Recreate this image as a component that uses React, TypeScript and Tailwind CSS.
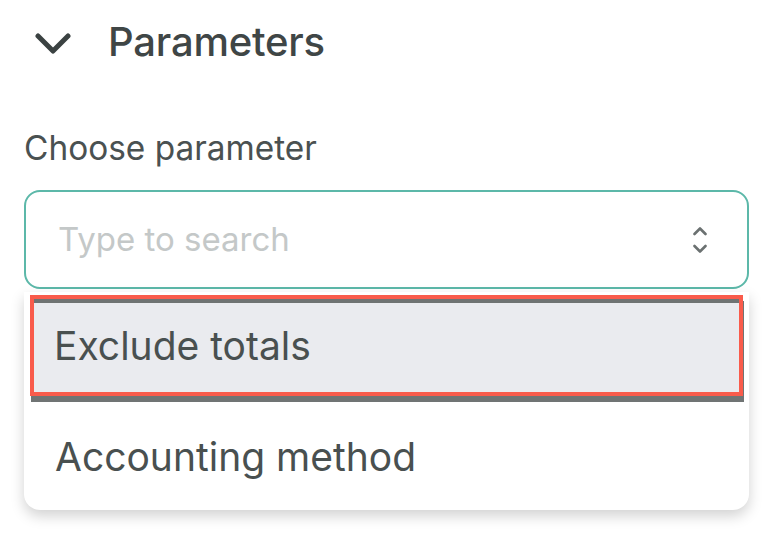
import React from "react";

const options = ["Exclude totals", "Accounting method"];

const ChevronDown = () => (
  <svg width="36" height="22" viewBox="0 0 36 22" fill="none">
    <path
      d="M3 3L18 18L33 3"
      stroke="#3b4242"
      strokeWidth="5"
      strokeLinecap="round"
      strokeLinejoin="round"
    />
  </svg>
);

const UpDown = () => (
  <svg width="14" height="28" viewBox="0 0 14 28" fill="none">
    <path d="M1.5 8L7 2.5L12.5 8" stroke="#6b7171" strokeWidth="2.6" strokeLinecap="round" strokeLinejoin="round" />
    <path d="M1.5 20L7 25.5L12.5 20" stroke="#6b7171" strokeWidth="2.6" strokeLinecap="round" strokeLinejoin="round" />
  </svg>
);

export default function App() {
  return (
    <div
      className="w-[768px] h-[542px] bg-white pl-6 pr-[19px] pt-[22px] text-[#454c4c]"
      style={{ fontFamily: "Inter, 'Noto Sans', sans-serif" }}
    >
      {/* Header */}
      <div className="flex items-center h-[40px]">
        <div className="w-[84px] pl-[11px] pt-[4px] flex items-center">
          <ChevronDown />
        </div>
        <h2 className="text-[40px] font-medium tracking-[-0.2px] text-[#3f4646] leading-[40px]">
          Parameters
        </h2>
      </div>

      <p className="mt-[70px] text-[33.4px] leading-[32px] text-[#4a5151]">Choose parameter</p>

      {/* Select */}
      <div className="mt-[26px] relative">
        <div className="h-[99px] rounded-[16px] border-2 border-[#5cb8a9] flex items-center pl-[32px] pr-[40px]">
          <span className="flex-1 text-[33px] leading-none text-[#c4c8c8]">Type to search</span>
          <UpDown />
        </div>

        {/* Menu */}
        <div className="absolute left-0 right-0 top-[102px] bg-white rounded-b-[16px] shadow-[0_6px_14px_rgba(0,0,0,0.18)] pt-[3px]">
          <div className="mx-[6px] h-[101px] border-4 border-[#f95b4b] bg-[#eaebef] shadow-[inset_0_4px_0_#6f7373,1px_6px_0_#707474] flex items-center pl-[20px]">
            <span className="text-[39px] leading-none text-[#495050]">{options[0]}</span>
          </div>
          <div className="mt-[6px] h-[108px] flex items-center pl-[31px]">
            <span className="text-[39px] leading-none text-[#495050]">{options[1]}</span>
          </div>
        </div>
      </div>
    </div>
  );
}
